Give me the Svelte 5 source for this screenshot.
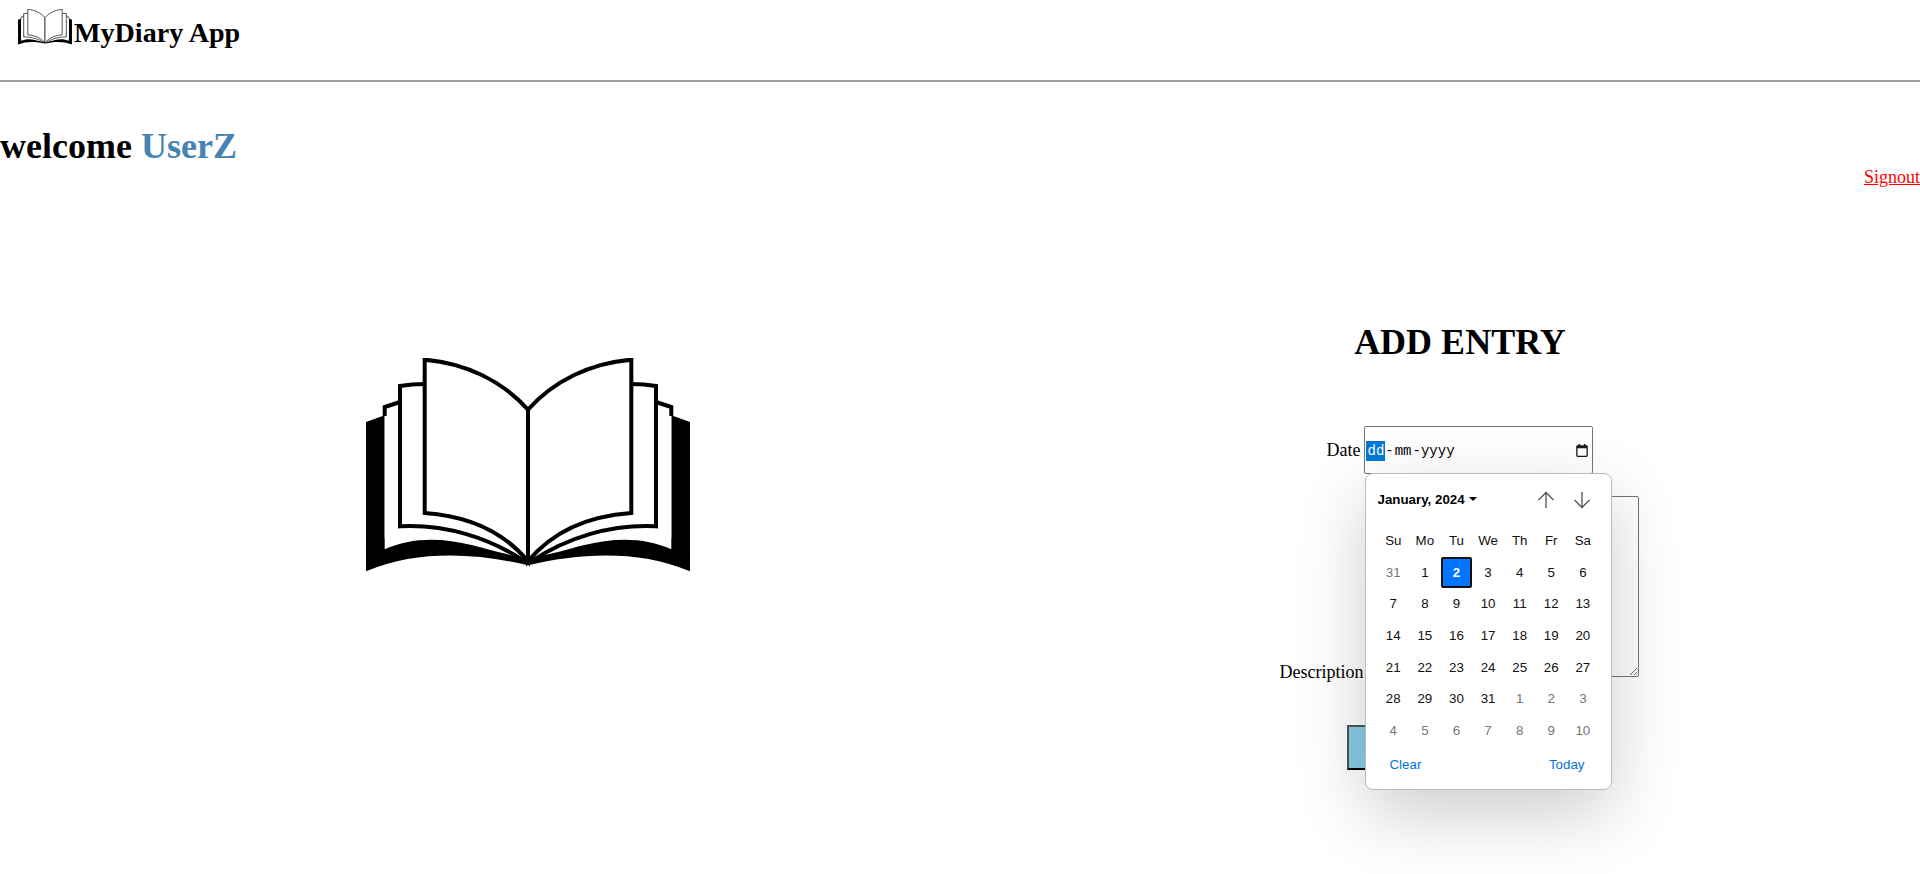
<script>
  const heads = ['Su','Mo','Tu','We','Th','Fr','Sa'];
  const days = [];
  days.push({ n: 31, muted: true });
  for (let i = 1; i <= 31; i++) days.push({ n: i, muted: false, selected: i === 2 });
  for (let i = 1; i <= 10; i++) days.push({ n: i, muted: true });
</script>

{#snippet book(cls)}
  <svg class={cls} viewBox="80 50 972 640" aria-hidden="true">
    <path d="M80 242 L136 222 V590 H996 V222 L1052 242 V690 C900 625 720 635 566 672 C412 635 232 625 80 690 Z" fill="#000" />
    {#each ['', 'translate(1132 0) scale(-1 1)'] as t}
      <g transform={t}>
        <path d="M136 197 L182 182 V300 H566 V652 C500 640 440 622 400 612 C300 586 210 590 136 624 Z" fill="#fff" />
        <path d="M136 224 V197 L182 182" fill="none" stroke="#000" stroke-width="12" />
        <path d="M182 134 C205 130 230 128 256 128 V520 L566 660 C470 590 330 552 182 555 Z" fill="#fff" />
        <path d="M256 128 C230 128 205 130 182 134 V555 C320 548 450 590 556 660" fill="none" stroke="#000" stroke-width="12" />
        <path d="M256 55 C380 65 490 120 566 205 V660 C500 580 400 525 256 515 Z" fill="#fff" stroke="#000" stroke-width="12" stroke-linejoin="miter" />
      </g>
    {/each}
  </svg>
{/snippet}

<header class="topbar">
  {@render book('logo')}
  <span class="brand">MyDiary App</span>
</header>
<hr class="rule" />

<section class="welcome">
  <h1>welcome <span class="user">UserZ</span></h1>
  <div class="signout"><a href="#signout">Signout</a></div>
</section>

<main class="content">
  <div class="art">
    {@render book('hero')}
  </div>
  <div class="entry">
    <h2>ADD ENTRY</h2>
    <form>
      <div class="row date-row">
        <label for="date">Date</label>
        <div class="date-wrap">
          <div class="date-input" id="date">
            <span class="seg sel">dd</span><span class="dash">-</span><span class="seg mid">mm</span><span class="dash">-</span><span class="seg">yyyy</span>
            <svg class="cal" viewBox="0 0 12 13" aria-hidden="true">
              <path d="M2.5 0h1.6v1.2h3.8V0h1.6v1.2h.9c.8 0 1.4.6 1.4 1.4v9c0 .8-.6 1.4-1.4 1.400H1.600C.8 13 .2 12.400.2 11.600v-9c0-.8.6-1.400 1.400-1.400h.9z M1.500 4.200v7.200c0 .2.1.3.3.3h8.400c.2 0 .3-.1.3-.3V4.200z" fill="#1a1a1a" fill-rule="evenodd" />
            </svg>
          </div>
          <div class="picker">
            <div class="picker-head">
              <span class="month">January, 2024 <svg class="caret" viewBox="0 0 8 4"><path d="M0 0h8L4 4z" fill="#000" /></svg></span>
              <span class="arrows">
                <svg viewBox="0 0 18 18"><path d="M9 17V1.500M1.500 9 9 1.500 16.500 9" fill="none" stroke="#555" stroke-width="1.300" /></svg>
                <svg viewBox="0 0 18 18"><path d="M9 1v15.500M1.500 9 9 16.500 16.500 9" fill="none" stroke="#555" stroke-width="1.300" /></svg>
              </span>
            </div>
            <div class="grid">
              {#each heads as h}<span class="cell">{h}</span>{/each}
              {#each days as d}
                <span class="cell" class:muted={d.muted} class:selected={d.selected}>{d.n}</span>
              {/each}
            </div>
            <div class="picker-foot">
              <span>Clear</span>
              <span>Today</span>
            </div>
          </div>
        </div>
      </div>
      <div class="row desc-row">
        <label for="desc">Description</label>
        <textarea id="desc"></textarea>
      </div>
      <div class="row">
        <button type="button">Add</button>
      </div>
    </form>
  </div>
</main>

<style>
  :global(body) {
    font-family: "Liberation Serif", "Times New Roman", serif;
    background: #fff;
    color: #000;
    min-height: 874px;
  }
  .topbar {
    height: 80px;
    box-sizing: border-box;
    padding: 9px 0 0 18px;
    display: flex;
    align-items: flex-start;
  }
  .logo {
    width: 54px;
    height: 35.500px;
    display: block;
  }
  .brand {
    font-size: 28.100px;
    font-weight: bold;
    line-height: 32px;
    margin-top: 8px;
    margin-left: 2px;
  }
  .rule {
    margin: 0;
    border: 0;
    height: 2px;
    background: #a0a0a0;
  }
  .welcome h1 {
    margin: 44px 0 0;
    font-size: 36px;
    line-height: 41px;
    font-weight: bold;
  }
  .user { color: steelblue; }
  .signout {
    text-align: right;
    font-size: 18px;
    line-height: 21px;
    margin-top: 0;
  }
  .signout a { color: red; }
  .content {
    display: flex;
    margin-top: 134px;
  }
  .art {
    flex: 0 0 1000px;
    box-sizing: border-box;
    padding-left: 56px;
    display: flex;
    justify-content: center;
    align-items: flex-start;
    padding-top: 36px;
  }
  .hero {
    width: 324px;
    height: 213.300px;
    display: block;
  }
  .entry {
    flex: 1;
    text-align: center;
  }
  h2 {
    margin: 0 0 0;
    font-size: 36px;
    line-height: 41px;
    font-weight: bold;
  }
  form { margin-top: 63px; }
  .row { position: relative; }
  label { font-size: 18px; position: relative; top: 1px; }
  .date-wrap {
    position: relative;
    display: inline-block;
    text-align: left;
  }
  .date-input {
    box-sizing: border-box;
    width: 229px;
    height: 48px;
    border: 1px solid #767676;
    border-radius: 2px;
    background: #fff;
    font-family: "Liberation Mono", monospace;
    font-size: 14px;
    display: flex;
    align-items: center;
    padding-left: 1px;
    padding-top: 1px;
    position: relative;
  }
  .seg { display: inline-block; line-height: 20px; }
  .sel { background: #0078d7; color: #fff; padding: 0 1px; }
  .mid { padding: 0 1px; }
  .cal {
    position: absolute;
    right: 4px;
    top: 17px;
    width: 12px;
    height: 13px;
  }
  .picker {
    position: absolute;
    left: 1px;
    top: 47px;
    width: 247px;
    height: 317px;
    box-sizing: border-box;
    background: #fff;
    border: 1px solid #bbb;
    border-radius: 8px;
    box-shadow: 0 24px 70px rgba(0, 0, 0, 0.2);
    font-family: "Liberation Sans", Arial, sans-serif;
    font-size: 13.333px;
    z-index: 5;
    padding: 0 11px;
  }
  .picker-head {
    height: 51px;
    display: flex;
    align-items: center;
    justify-content: space-between;
  }
  .month { font-weight: bold; display: inline-flex; align-items: center; gap: 4px; margin-top: -1px; }
  .caret { width: 8px; height: 4px; }
  .arrows { display: flex; gap: 18px; margin-right: 9px; }
  .arrows svg { width: 18px; height: 18px; display: block; }
  .grid {
    display: grid;
    grid-template-columns: repeat(7, 31.600px);
    grid-auto-rows: 31.600px;
  }
  .cell {
    display: flex;
    align-items: center;
    justify-content: center;
    box-sizing: border-box;
    color: #101010;
  }
  .muted { color: #767676; }
  .selected {
    background: #0075ff;
    border: 2px solid #101010;
    border-radius: 2px;
    color: #fff;
    font-weight: bold;
  }
  .picker-foot {
    display: flex;
    justify-content: space-between;
    padding: 10px 16px 0 12px;
    color: #0075d8;
    line-height: 18px;
  }
  .desc-row { margin-top: 22px; }
  textarea {
    box-sizing: border-box;
    width: 272px;
    height: 181px;
    border: 1px solid #767676;
    border-radius: 2px;
    padding: 2px;
    font-family: "Liberation Mono", monospace;
    font-size: 13px;
    vertical-align: baseline;
    margin-right: 1px;
  }
  button {
    width: 226px;
    height: 45px;
    margin-top: 43px;
    background: #87ceeb;
    border: 2px outset #000;
    font-family: inherit;
    font-size: 16px;
  }
</style>
